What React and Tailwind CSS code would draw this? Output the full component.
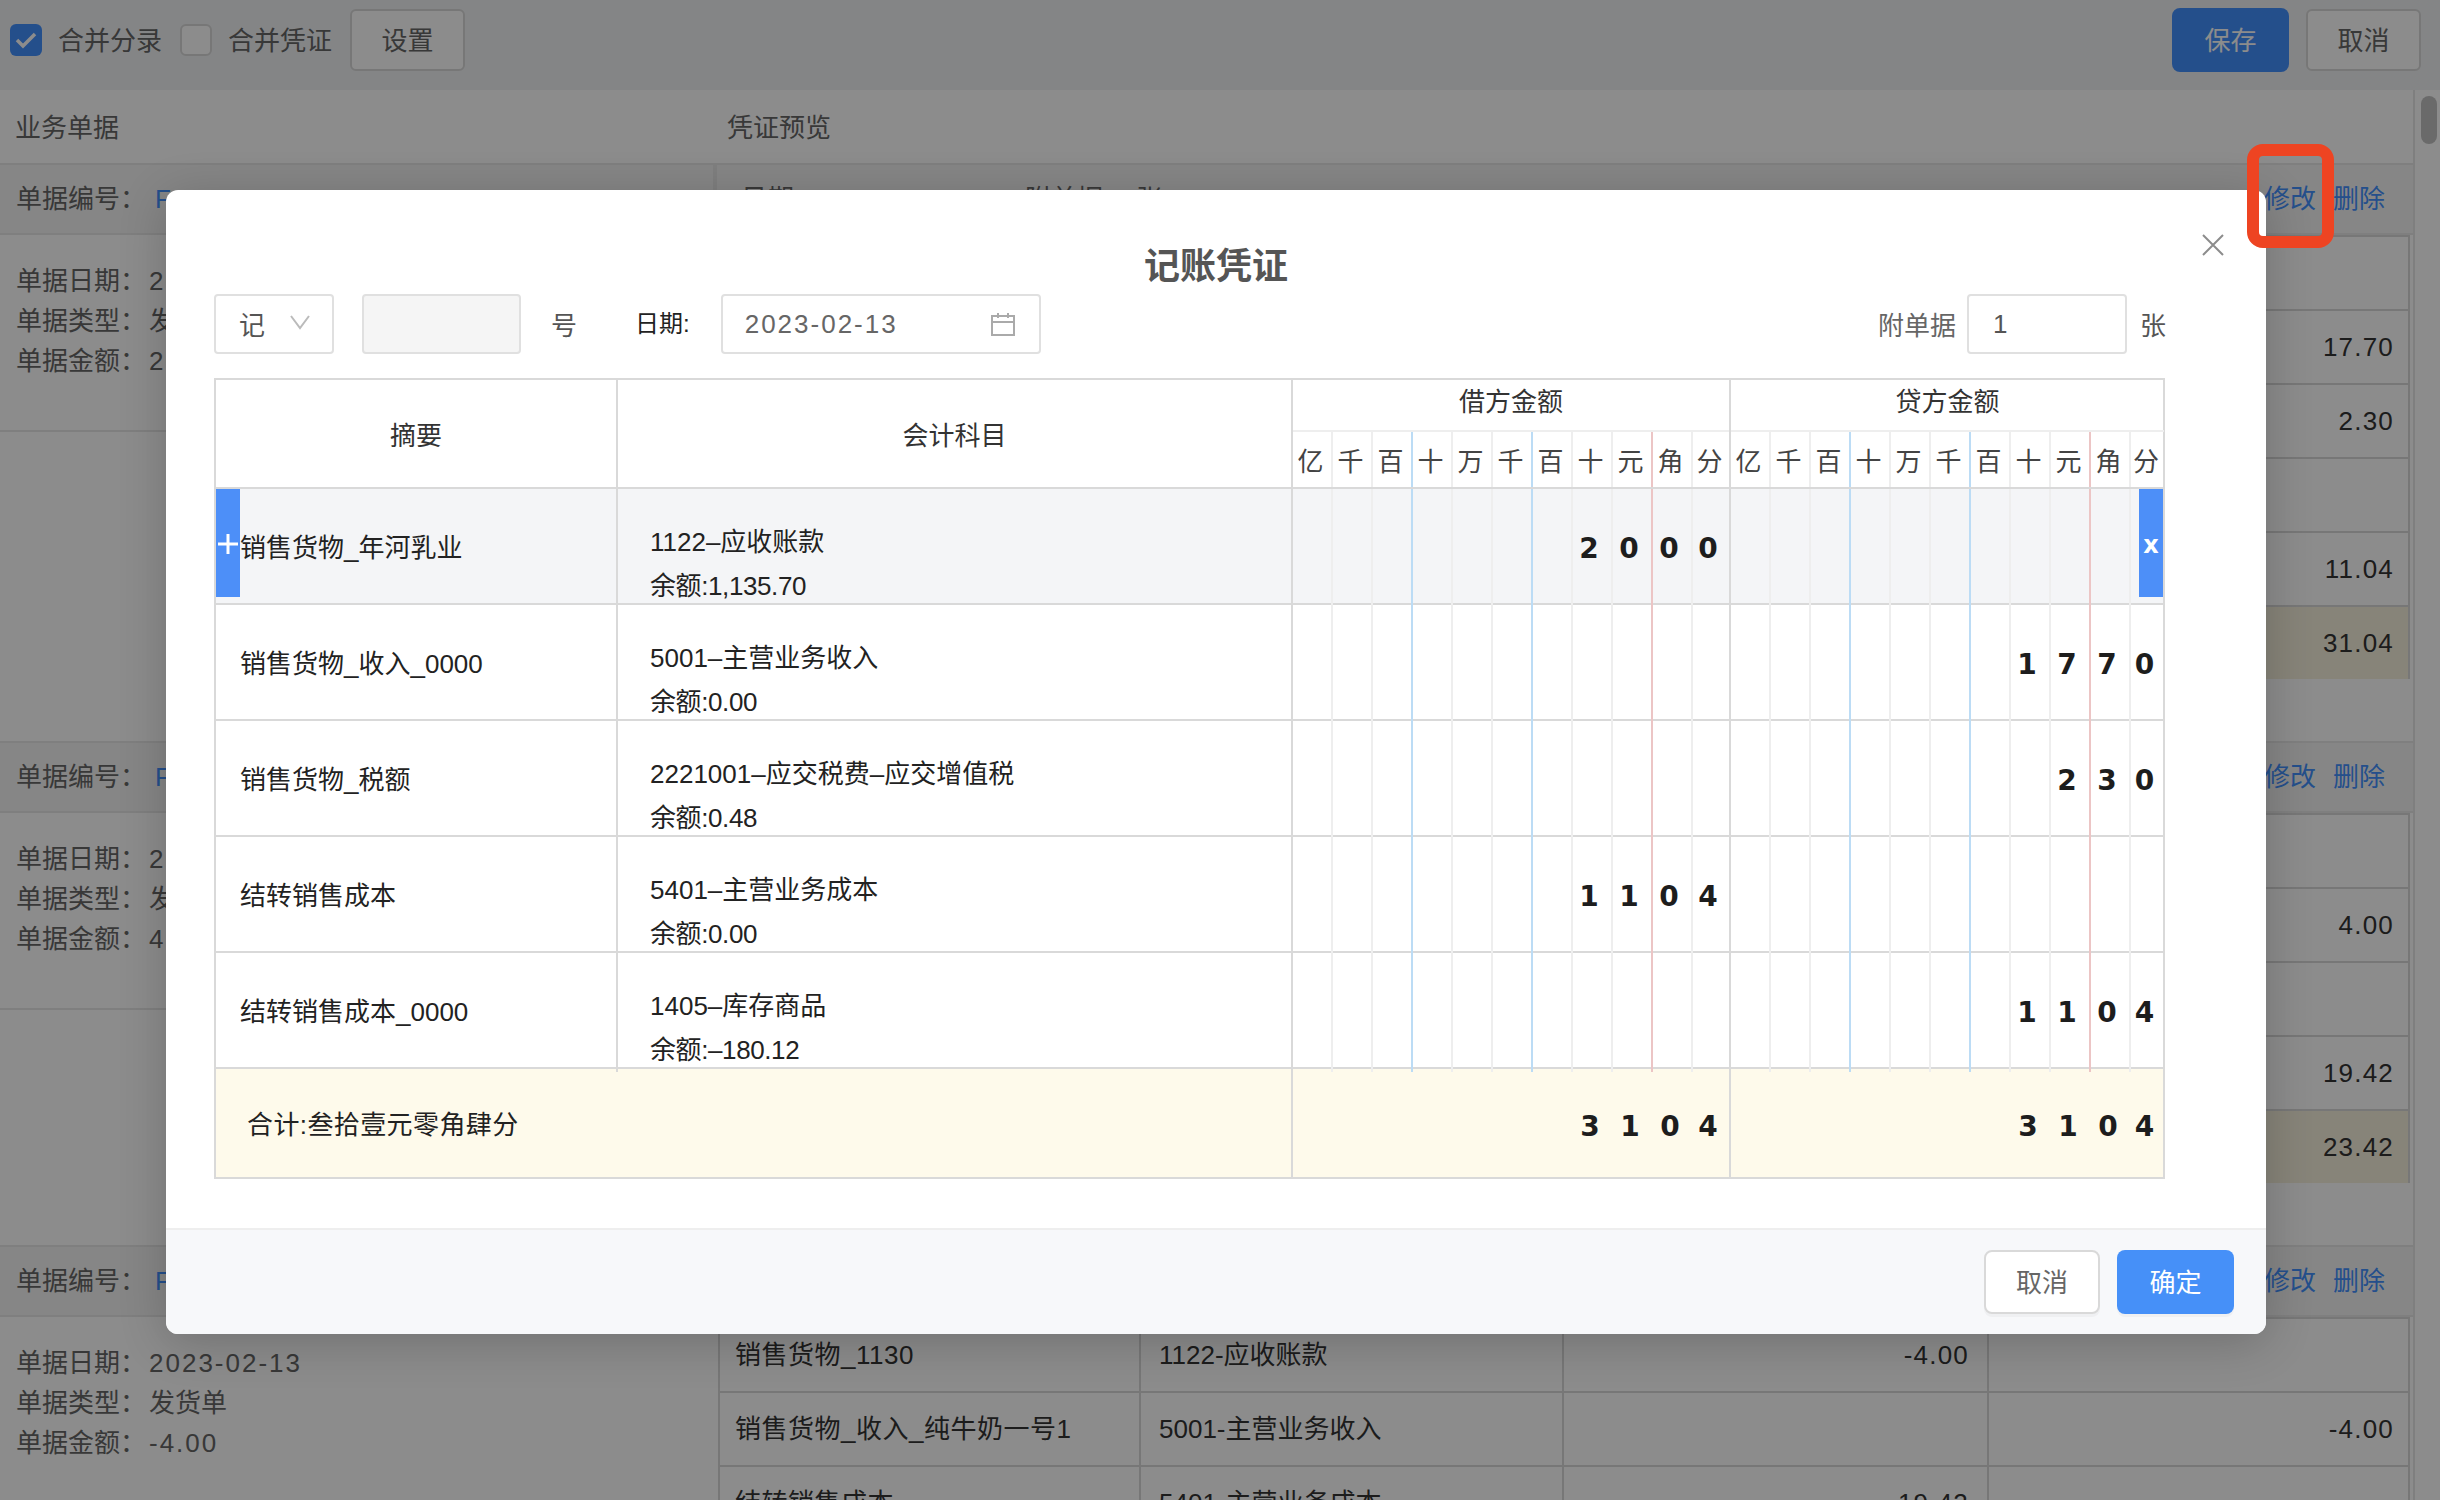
import React from 'react';

const sections = [
  {
    no: 'F1202302130012',
    date: '2023-02-13',
    type: '发货单',
    amount: '20.00',
    rows: [
      ['', '', '', ''],
      ['', '', '', '17.70'],
      ['', '', '', '2.30'],
      ['', '', '', ''],
      ['', '', '', '11.04'],
      ['', '', '', '31.04', true],
    ],
  },
  {
    no: 'F1202302130013',
    date: '2023-02-13',
    type: '发货单',
    amount: '4.00',
    rows: [
      ['', '', '', ''],
      ['', '', '', '4.00'],
      ['', '', '', ''],
      ['', '', '', '19.42'],
      ['', '', '', '23.42', true],
    ],
  },
  {
    no: 'F1202302130014',
    date: '2023-02-13',
    type: '发货单',
    amount: '-4.00',
    rows: [
      ['销售货物_1130', '1122-应收账款', '-4.00', ''],
      ['销售货物_收入_纯牛奶一号1', '5001-主营业务收入', '', '-4.00'],
      ['结转销售成本', '5401-主营业务成本', '19.42', ''],
    ],
  },
];

const units = ['亿', '千', '百', '十', '万', '千', '百', '十', '元', '角', '分'];

const voucherRows = [
  { name: '销售货物_年河乳业', account: '1122–应收账款', balance: '余额:1,135.70', debit: '2000', credit: '', active: true },
  { name: '销售货物_收入_0000', account: '5001–主营业务收入', balance: '余额:0.00', debit: '', credit: '1770' },
  { name: '销售货物_税额', account: '2221001–应交税费–应交增值税', balance: '余额:0.48', debit: '', credit: '230' },
  { name: '结转销售成本', account: '5401–主营业务成本', balance: '余额:0.00', debit: '1104', credit: '' },
  { name: '结转销售成本_0000', account: '1405–库存商品', balance: '余额:–180.12', debit: '', credit: '1104' },
];

function lineClass(i) {
  if (i === 10) return '';
  if (i === 2 || i === 5) return 'border-r-2 border-[#bcdcf5]';
  if (i === 8) return 'border-r-2 border-[#ecc5c5]';
  return 'border-r-2 border-[#eeeeee]';
}

function DigitCells({ value = '', lines = true, className = '' }) {
  const padded = value.padStart(11, ' ');
  return (
    <div className={`grid grid-cols-[repeat(10,40px)_1fr] h-full ${className}`}>
      {units.map((u, i) => (
        <div key={i} className={`pr-[6px] flex items-center justify-center font-['DejaVu_Sans',sans-serif] font-bold text-[28px] text-[#1d1d1d] ${lines ? lineClass(i) : ''}`}>
          {padded[i].trim()}
        </div>
      ))}
    </div>
  );
}

function AmountHead({ title, last }) {
  return (
    <div className={`flex flex-col ${last ? '' : 'border-r-2 border-[#d9d9d9]'}`}>
      <div className="h-[52px] pb-[6px] flex items-center justify-center text-[26px] text-[#333] border-b-2 border-[#eeeeee]">{title}</div>
      <div className="grid grid-cols-[repeat(10,40px)_1fr] flex-1">
        {units.map((u, i) => (
          <div key={i} className={`pt-[6px] pr-[3px] flex items-center justify-center text-[26px] text-[#444] ${lineClass(i)}`}>{u}</div>
        ))}
      </div>
    </div>
  );
}

function BackgroundSection({ section }) {
  return (
    <div className="mb-[62px]">
      <div className="h-[72px] grid grid-cols-[717px_1fr] bg-[#f5f5f5] border-y-2 border-[#e8e8e8] text-[26px] text-[#666]">
        <div className="flex items-center px-[16px] border-r-4 border-[#e8e8e8]">
          <span className="w-[139px]">单据编号：</span>
          <span className="text-[#4390fe] tracking-[2px]">{section.no}</span>
        </div>
        <div className="flex items-center pl-[24px] pr-[28px]">
          <span className="tracking-[1px]">日期：{section.date}</span>
          <span className="ml-[60px]">附单据： 张</span>
          <span className="ml-auto text-[#4390fe]">修改</span>
          <span className="ml-[17px] text-[#4390fe]">删除</span>
        </div>
      </div>
      <div className="grid grid-cols-[717px_1fr]">
        <div className="h-[197px] border-b-2 border-[#e8e8e8] pt-[26px] px-[16px] text-[26px] leading-[40px] text-[#666]">
          <div className="flex"><span className="w-[133px]">单据日期：</span><span className="tracking-[2px]">{section.date}</span></div>
          <div className="flex"><span className="w-[133px]">单据类型：</span><span>{section.type}</span></div>
          <div className="flex"><span className="w-[133px]">单据金额：</span><span className="tracking-[2px]">{section.amount}</span></div>
        </div>
        <div className="ml-[1px] w-[1692px] border-l-2 border-r-2 border-[#d9d9d9]">
          {section.rows.map((r, i) => (
            <div key={i} className={`h-[74px] grid grid-cols-[421px_423px_425px_1fr] border-t-2 border-[#d9d9d9] text-[26px] text-[#333] ${r[4] ? 'bg-[#f6f0dc]' : ''}`}>
              <div className="flex items-center pl-[15px] border-r-2 border-[#d9d9d9] tracking-[0.5px] whitespace-nowrap overflow-hidden">{r[0]}</div>
              <div className="flex items-center pl-[18px] border-r-2 border-[#d9d9d9] whitespace-nowrap">{r[1]}</div>
              <div className="flex items-center justify-end pr-[18px] border-r-2 border-[#d9d9d9] tracking-[1.2px]">{r[2]}</div>
              <div className="flex items-center justify-end pr-[14px] tracking-[1.2px]">{r[3]}</div>
            </div>
          ))}
        </div>
      </div>
    </div>
  );
}

function VoucherRow({ row }) {
  return (
    <div className={`relative h-[116px] grid grid-cols-[402px_675px_438px_433px] border-b-2 border-[#d9d9d9] text-[#222] text-[26px] ${row.active ? 'bg-[#f4f5f7]' : ''}`}>
      {row.active && (
        <button className="absolute left-0 top-0 w-[24px] h-[108px] pt-[2px] bg-[#4d8ff8] flex items-center justify-center text-white">
          <svg width="20" height="20" viewBox="0 0 20 20" fill="none" stroke="currentColor" strokeWidth="3">
            <path d="M10 0v20M0 10h20" />
          </svg>
        </button>
      )}
      {row.active && (
        <button className="absolute right-0 top-0 w-[24px] h-[108px] pt-[4px] bg-[#4d8ff8] flex items-center justify-center text-white font-['DejaVu_Sans',sans-serif] font-bold text-[24px]">x</button>
      )}
      <div className="flex items-center pl-[24px] border-r-2 border-[#d9d9d9]">{row.name}</div>
      <div className="pl-[32px] pt-[31px] leading-[44px] border-r-2 border-[#d9d9d9]">
        <div>{row.account}</div>
        <div className="tracking-[-0.4px]">{row.balance}</div>
      </div>
      <div className="border-r-2 border-[#d9d9d9]"><DigitCells value={row.debit} /></div>
      <div><DigitCells value={row.credit} /></div>
    </div>
  );
}

function VoucherModal() {
  return (
    <div className="absolute left-[166px] top-[190px] w-[2100px] h-[1144px] flex flex-col bg-white rounded-[12px] shadow-[0_8px_48px_rgba(0,0,0,0.2)] overflow-hidden">
      <button className="absolute right-[42px] top-[44px] text-[#8c8c8c]">
        <svg width="22" height="22" viewBox="0 0 22 22" fill="none" stroke="currentColor" strokeWidth="2">
          <path d="M1 1l20 20M21 1L1 21" />
        </svg>
      </button>
      <div className="flex-1 pl-[48px] pr-[101px]">
        <h2 className="mt-[56px] mb-[6px] pl-[53px] text-center text-[36px] leading-[42px] font-bold text-[#555]">记账凭证</h2>
        <div className="h-[60px] flex items-center text-[26px]">
          <div className="w-[120px] h-[60px] border-2 border-[#e0e0e0] rounded-[4px] flex items-center pl-[23px] text-[#555]">
            <span className="mt-[4px]">记</span>
            <svg className="ml-[25px] -mt-[4px]" width="20" height="16" viewBox="0 0 20 16" fill="none" stroke="#bbbbbb" strokeWidth="2">
              <path d="M1 2l9 12 9-12" />
            </svg>
          </div>
          <div className="ml-[28px] w-[159px] h-[60px] bg-[#f5f5f5] border-2 border-[#e0e0e0] rounded-[4px]" />
          <span className="ml-[30px] mt-[4px] text-[#555]">号</span>
          <span className="ml-[58px] text-[#222] text-[24px]">日期:</span>
          <div className="ml-[31px] w-[320px] h-[60px] border-2 border-[#e0e0e0] rounded-[4px] flex items-center pl-[22px] pr-[24px] text-[#666] tracking-[2px]">
            2023-02-13
            <svg className="ml-auto" width="24" height="24" viewBox="0 0 24 24" fill="none" stroke="#aaaaaa" strokeWidth="2">
              <rect x="1" y="4" width="22" height="19" />
              <path d="M1 10h22M7 1v5M17 1v5" />
            </svg>
          </div>
          <span className="ml-auto mt-[4px] text-[#666]">附单据</span>
          <div className="ml-[11px] w-[160px] h-[60px] border-2 border-[#e0e0e0] rounded-[4px] flex items-center pl-[24px] text-[#555]">1</div>
          <span className="ml-[13px] mt-[4px] w-[25px] text-[#555]">张</span>
        </div>
        <div className="mt-[24px] border-2 border-[#d9d9d9]">
          <div className="h-[109px] grid grid-cols-[402px_675px_438px_433px] border-b-2 border-[#d9d9d9]">
            <div className="pt-[6px] flex items-center justify-center text-[26px] text-[#333] border-r-2 border-[#d9d9d9]">摘要</div>
            <div className="pt-[6px] flex items-center justify-center text-[26px] text-[#333] border-r-2 border-[#d9d9d9]">会计科目</div>
            <AmountHead title="借方金额" />
            <AmountHead title="贷方金额" last />
          </div>
          {voucherRows.map((row) => <VoucherRow key={row.name} row={row} />)}
          <div className="h-[108px] grid grid-cols-[1077px_438px_433px] bg-[#fefaeb] text-[26px] text-[#222]">
            <div className="flex items-center pl-[31px] pt-[4px] tracking-[0.4px] border-r-2 border-[#d9d9d9]">合计:叁拾壹元零角肆分</div>
            <div className="border-r-2 border-[#d9d9d9] pt-[8px]"><DigitCells value="3104" lines={false} /></div>
            <div className="pt-[8px]"><DigitCells value="3104" lines={false} /></div>
          </div>
        </div>
      </div>
      <div className="h-[106px] flex items-center justify-end gap-[17px] pr-[32px] bg-[#f7f8fa] border-t-2 border-[#eeeeee] text-[26px]">
        <button className="w-[116px] h-[64px] pt-[2px] bg-white border-2 border-[#d9d9d9] rounded-[8px] text-[#666] shadow-[0_3px_0_rgba(0,0,0,0.03)]">取消</button>
        <button className="w-[117px] h-[64px] pt-[2px] bg-[#4690f8] rounded-[8px] text-white shadow-[0_3px_0_rgba(0,0,0,0.03)]">确定</button>
      </div>
    </div>
  );
}

export default function App() {
  return (
    <div className="relative w-[2440px] h-[1500px] overflow-hidden bg-white font-['Liberation_Sans','Noto_Sans_CJK_SC',sans-serif]">
      {/* page behind the dialog */}
      <div className="h-[90px] pb-[10px] flex items-center bg-[#f0f2f5] pl-[10px] pr-[19px] text-[26px] text-[#666]">
        <span className="w-[32px] h-[32px] rounded-[6px] bg-[#4390fe] flex items-center justify-center">
          <svg width="22" height="18" viewBox="0 0 22 18" fill="none" stroke="white" strokeWidth="3.5">
            <path d="M2 9l6 6L20 3" />
          </svg>
        </span>
        <span className="ml-[16px] mt-[2px]">合并分录</span>
        <span className="ml-[18px] w-[32px] h-[32px] rounded-[6px] bg-white border-2 border-[#d9d9d9]" />
        <span className="ml-[16px] mt-[2px]">合并凭证</span>
        <button className="ml-[18px] w-[115px] h-[62px] pt-[3px] bg-white border-2 border-[#d9d9d9] rounded-[6px] text-[#666]">设置</button>
        <button className="ml-auto w-[117px] h-[64px] pt-[2px] bg-[#4390fe] rounded-[8px] text-white">保存</button>
        <button className="ml-[17px] w-[115px] h-[62px] pt-[3px] bg-white border-2 border-[#d9d9d9] rounded-[6px] text-[#666]">取消</button>
      </div>
      <div className="flex">
        <div className="w-[2413px]">
          <div className="h-[73px] pt-[3px] grid grid-cols-[727px_1fr] items-center text-[26px] text-[#666]">
            <span className="pl-[15px]">业务单据</span>
            <span>凭证预览</span>
          </div>
          {sections.map((s) => <BackgroundSection key={s.no} section={s} />)}
        </div>
        <div className="w-[27px] h-[1410px] border-l-2 border-[#e8e8e8] pt-[6px] pl-[6px]">
          <div className="w-[16px] h-[48px] rounded-full bg-[#c1c1c1]" />
        </div>
      </div>

      {/* dimmed layer, dialog and the annotation box */}
      <div className="absolute inset-0 bg-black/45" />
      <VoucherModal />
      <div className="absolute left-[2247px] top-[144px] w-[87px] h-[104px] border-[12px] border-[#ee4422] rounded-[16px]" />
    </div>
  );
}
